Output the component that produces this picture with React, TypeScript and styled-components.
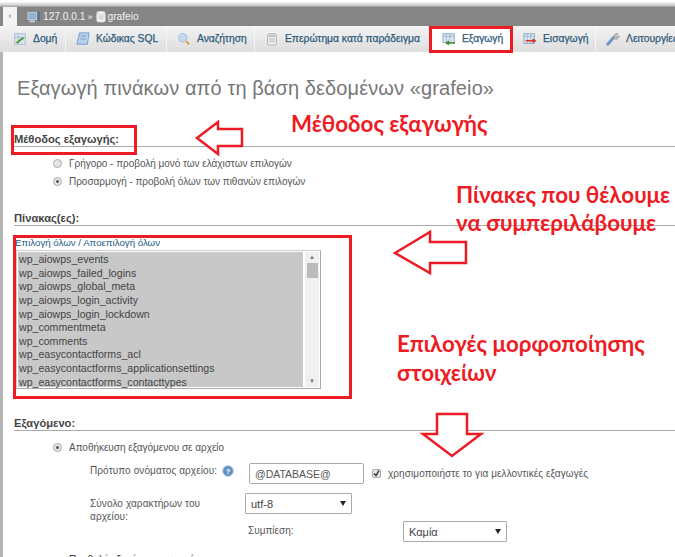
import React from 'react';
import styled, { createGlobalStyle } from 'styled-components';

const GlobalStyle = createGlobalStyle`
    html, body {
        margin: 0;
        padding: 0;
        background: #fff;
    }
    * {
        box-sizing: border-box;
    }
`;

const Page = styled.div`
    position: relative;
    width: 675px;
    height: 557px;
    overflow: hidden;
    background: #fff;
    font-family: "Liberation Sans", Arial, sans-serif;
    color: #444;
`;

const TopEdge = styled.div`
    height: 7px;
    background: linear-gradient(#fff 0, #fff 2px, #e4e4e4 3px, #d8d8d8 5px, #aaa 6px);
`;

const Breadcrumb = styled.div`
    display: flex;
    align-items: center;
    height: 19px;
    padding-left: 3px;
    background: #858585;
    color: #f2f2f2;
    font-size: 10.2px;
`;

const Collapse = styled.div`
    width: 14px;
    height: 19px;
    margin-right: 10px;
    background: #f4f4f4;
    color: #666;
    font-size: 9px;
    line-height: 18px;
    text-align: center;
`;

const Crumb = styled.span`
    display: flex;
    align-items: center;
    gap: 2px;
`;

const Sep = styled.span`
    margin: 0 3px 0 2px;
    font-size: 9px;
`;

const TabBar = styled.div`
    display: flex;
    height: 26px;
    padding-left: 3px;
    background: linear-gradient(#f3f3f3, #dedede);
    border-bottom: 1px solid #e2e2e2;
`;

const Tab = styled.div<{ $w: number; $active?: boolean }>`
    display: flex;
    flex: none;
    align-items: center;
    gap: 6px;
    width: ${p => p.$w}px;
    padding-left: ${p => (p.$active ? 12 : 10)}px;
    border-right: 1px solid #f6f6f6;
    background: ${p => (p.$active ? '#fff' : 'transparent')};
    color: #2f5a7a;
    font-size: 10.3px;
    white-space: nowrap;
    -webkit-text-stroke: 0.25px #2f5a7a;
`;

const Main = styled.div`
    height: 505px;
    padding: 24px 0 0 11px;
    border-left: 3px solid #b4b4b4;
`;

const Title = styled.h1`
    margin: 0 0 0 3px;
    color: #777;
    font-size: 20px;
    font-weight: 400;
    line-height: 24px;
    letter-spacing: 0.1px;
`;

const SectionTitle = styled.div<{ $top: number }>`
    margin-top: ${p => p.$top}px;
    padding-bottom: 0;
    border-bottom: 1px solid #aaa;
    color: #444;
    font-size: 11.2px;
    font-weight: 700;
    line-height: 13px;
`;

const Options = styled.div`
    display: flex;
    flex-direction: column;
    gap: 5px;
    padding: 10px 0 0 38px;
`;

const Option = styled.div`
    display: flex;
    align-items: center;
    gap: 7px;
    height: 13px;
    font-size: 10px;
    color: #555;
    letter-spacing: -0.03px;
`;

const Radio = styled.span<{ $on?: boolean }>`
    position: relative;
    flex: none;
    width: 9px;
    height: 9px;
    margin-left: 1px;
    border: 1px solid #aaa;
    border-radius: 50%;
    background: #e6e6e6;

    &::after {
        content: '';
        display: ${p => (p.$on ? 'block' : 'none')};
        width: 3px;
        height: 3px;
        margin: 2px;
        border-radius: 50%;
        background: #555;
    }
`;

const TableLinks = styled.div`
    margin: 10px 0 0 1px;
    color: #235a81;
    font-size: 9.7px;
    line-height: 13px;
`;

const ListBox = styled.div`
    display: flex;
    width: 305px;
    height: 139px;
    margin: 1px 0 0 2px;
    padding: 1px;
    border: 1px solid #ccc;
    border-right-color: #aaa;
    border-bottom-color: #aaa;
`;

const ListItems = styled.div`
    flex: none;
    width: 285px;
    background: #c8c8c8;
    padding: 1px 0 0 1px;
`;

const ListItem = styled.div`
    height: 13.65px;
    color: #444;
    font-size: 10.6px;
    line-height: 13.65px;
`;

const ScrollTrack = styled.div`
    display: flex;
    flex: 1;
    flex-direction: column;
    align-items: center;
    margin-left: 2px;
    background: #f0f0f0;
    color: #777;
    font-size: 6px;
`;

const ScrollArrow = styled.div`
    height: 11px;
    line-height: 11px;
`;

const ScrollThumb = styled.div`
    flex: none;
    width: 11px;
    height: 15px;
    background: #bbb;
`;

const ScrollGap = styled.div`
    flex: 1;
`;

const ExportBody = styled.div`
    padding: 10px 0 0 38px;
`;

const FormArea = styled.div`
    padding: 9px 0 0 38px;
    font-size: 10px;
    color: #555;
`;

const FormRow = styled.div<{ $h: number }>`
    display: flex;
    height: ${p => p.$h}px;
`;

const FormLabel = styled.div<{ $w: number; $top?: number }>`
    display: flex;
    flex: none;
    gap: 5px;
    width: ${p => p.$w}px;
    padding-top: ${p => p.$top ?? 0}px;
    line-height: 13px;
    letter-spacing: 0.1px;
`;

const Input = styled.div`
    flex: none;
    width: 115px;
    height: 21px;
    padding-left: 5px;
    border: 1px solid #aaa;
    border-radius: 2px;
    font-size: 10.5px;
    line-height: 20px;
    color: #555;
`;

const Check = styled.span`
    flex: none;
    display: flex;
    align-items: center;
    justify-content: center;
    width: 9px;
    height: 9px;
    margin: 6px 7px 0 8px;
    border: 1px solid #aaa;
    border-radius: 2px;
    background: #e4e4e4;
`;

const CheckText = styled.span`
    margin-top: 4px;
    line-height: 13px;
    letter-spacing: 0.08px;
`;

const Select = styled.div<{ $w: number }>`
    display: flex;
    flex: none;
    align-items: center;
    justify-content: space-between;
    width: ${p => p.$w}px;
    height: 21px;
    padding: 0 5px;
    border: 1px solid #aaa;
    border-radius: 1px;
    background: #fff;
    color: #444;
    font-size: 11px;
`;

const Caret = styled.span`
    width: 0;
    height: 0;
    border-left: 3px solid transparent;
    border-right: 3px solid transparent;
    border-top: 5px solid #222;
`;

const CompressLabel = styled.div`
    flex: none;
    width: 155px;
    margin: 3px 0 0 3px;
    line-height: 13px;
`;

const Cut = styled.div`
    margin: 5px 0 0 17px;
    font-size: 10px;
    line-height: 13px;
`;

// red marks that were drawn over the screenshot
const MarkBox = styled.div<{ $x: number; $y: number; $w: number; $h: number }>`
    position: absolute;
    left: ${p => p.$x}px;
    top: ${p => p.$y}px;
    width: ${p => p.$w}px;
    height: ${p => p.$h}px;
    border: 3px solid #ed1c24;
`;

const Note = styled.div<{ $x: number; $y: number }>`
    position: absolute;
    left: ${p => p.$x}px;
    top: ${p => p.$y}px;
    color: #ed1c24;
    font-family: Lato, "Open Sans", sans-serif;
    font-size: 22.3px;
    font-weight: 700;
    line-height: 29px;
    white-space: nowrap;
`;

const ArrowLayer = styled.svg`
    position: absolute;
    left: 0;
    top: 0;
    width: 675px;
    height: 557px;
    pointer-events: none;
`;

const IconBox = styled.svg<{ $w?: number }>`
    flex: none;
    width: ${p => p.$w ?? 14}px;
    height: 14px;
`;

const ServerIcon = () => (
    <IconBox $w={14} viewBox="0 0 16 16">
        <rect x="1" y="3" width="10" height="8" fill="#8fb0cf" stroke="#c4d2df" />
        <rect x="3" y="12" width="6" height="2" fill="#cfd6dd" />
        <rect x="12" y="2" width="3" height="11" fill="#5f7386" />
    </IconBox>
);

const DbIcon = () => (
    <IconBox $w={10} viewBox="0 0 12 16">
        <rect x="1" y="2" width="10" height="12" rx="2" fill="#f2f2f2" stroke="#ddd" />
        <ellipse cx="6" cy="3" rx="5" ry="1.6" fill="#fff" stroke="#ccc" />
        <rect x="3" y="6" width="6" height="5" fill="#d8d8d8" />
    </IconBox>
);

const StructIcon = () => (
    <IconBox viewBox="0 0 16 16">
        <rect x="2" y="2" width="12" height="12" fill="#dbe5f0" stroke="#a6bad0" />
        <path d="M2 6h12M6 2v12" stroke="#a6bad0" />
        <path d="M4 12.5l8-6" stroke="#4a9a2a" strokeWidth="2.2" />
    </IconBox>
);

const SqlIcon = () => (
    <IconBox viewBox="0 0 16 16">
        <path d="M4 1h11l-2 13H1z" fill="#b5cfec" stroke="#7199c4" />
        <path d="M5.5 4.5h6M5 8h6" stroke="#7199c4" />
    </IconBox>
);

const SearchIcon = () => (
    <IconBox viewBox="0 0 16 16">
        <circle cx="6.5" cy="6.5" r="4.8" fill="#c3d9ef" stroke="#a4b8cb" />
        <path d="M10.5 10.5l3.5 3.5" stroke="#d9a441" strokeWidth="2.6" />
    </IconBox>
);

const QueryIcon = () => (
    <IconBox viewBox="0 0 16 16">
        <rect x="3" y="3" width="10" height="12" rx="2" fill="#eee" stroke="#aaa" />
        <ellipse cx="8" cy="3.5" rx="5" ry="1.6" fill="#ddd" stroke="#aaa" />
        <rect x="5" y="7" width="6" height="5" fill="#d2d2d2" />
    </IconBox>
);

const ExportIcon = () => (
    <IconBox viewBox="0 0 16 16">
        <rect x="1" y="2" width="13" height="10" fill="#dbe6f2" stroke="#8aa4c0" />
        <path d="M1 5h13M5 2v10M9 2v10" stroke="#8aa4c0" strokeWidth="0.7" />
        <path d="M15 12.5H6M8 10.5l-3 2 3 2" fill="none" stroke="#3d8f2a" strokeWidth="1.6" />
    </IconBox>
);

const ImportIcon = () => (
    <IconBox viewBox="0 0 16 16">
        <rect x="1" y="2" width="12" height="11" fill="#dbe6f2" stroke="#8aa4c0" />
        <path d="M1 5h12M5 2v11M9 2v11" stroke="#8aa4c0" strokeWidth="0.7" />
        <path d="M3 10h10M11 8l3 2-3 2" fill="none" stroke="#d8352a" strokeWidth="1.6" />
    </IconBox>
);

const WrenchIcon = () => (
    <IconBox viewBox="0 0 16 16">
        <path d="M2 14l7-8" stroke="#6e96cc" strokeWidth="3.4" strokeLinecap="round" />
        <path d="M9 6a3.5 3.5 0 0 1 5-4l-2.4 2.2 1 1.4L15 4a3.5 3.5 0 0 1-5 4z" fill="#b8b8b8" stroke="#999" strokeWidth="0.6" />
    </IconBox>
);

const HelpIcon = () => (
    <IconBox $w={12} viewBox="0 0 12 12">
        <circle cx="6" cy="6" r="5.4" fill="#5f8fc4" stroke="#c4d3e3" />
        <text x="6" y="9" fontSize="8" fontWeight="700" textAnchor="middle" fill="#fff">?</text>
    </IconBox>
);

const tabs = [
    { label: 'Δομή', w: 63, icon: <StructIcon /> },
    { label: 'Κώδικας SQL', w: 101, icon: <SqlIcon /> },
    { label: 'Αναζήτηση', w: 88, icon: <SearchIcon /> },
    { label: 'Επερώτημα κατά παράδειγμα', w: 175, icon: <QueryIcon /> },
    { label: 'Εξαγωγή', w: 83, icon: <ExportIcon />, active: true },
    { label: 'Εισαγωγή', w: 83, icon: <ImportIcon /> },
    { label: 'Λειτουργίες', w: 90, icon: <WrenchIcon /> },
];

const tables = [
    'wp_aiowps_events',
    'wp_aiowps_failed_logins',
    'wp_aiowps_global_meta',
    'wp_aiowps_login_activity',
    'wp_aiowps_login_lockdown',
    'wp_commentmeta',
    'wp_comments',
    'wp_easycontactforms_acl',
    'wp_easycontactforms_applicationsettings',
    'wp_easycontactforms_contacttypes',
];

const App: React.FC = () => {
    return (
        <Page>
            <GlobalStyle />
            <TopEdge />
            <Breadcrumb>
                <Collapse>‹</Collapse>
                <Crumb><ServerIcon />127.0.0.1</Crumb>
                <Sep>»</Sep>
                <Crumb><DbIcon />grafeio</Crumb>
            </Breadcrumb>
            <TabBar>
                {tabs.map(t => (
                    <Tab key={t.label} $w={t.w} $active={t.active}>
                        {t.icon}
                        {t.label}
                    </Tab>
                ))}
            </TabBar>
            <Main>
                <Title>Εξαγωγή πινάκων από τη βάση δεδομένων «grafeio»</Title>

                <SectionTitle $top={33}>Μέθοδος εξαγωγής:</SectionTitle>
                <Options>
                    <Option><Radio />Γρήγορο - προβολή μονό των ελάχιστων επιλογών</Option>
                    <Option><Radio $on />Προσαρμογή - προβολή όλων των πιθανών επιλογών</Option>
                </Options>

                <SectionTitle $top={24}>Πίνακας(ες):</SectionTitle>
                <TableLinks>Επιλογή όλων / Αποεπιλογή όλων</TableLinks>
                <ListBox>
                    <ListItems>
                        {tables.map(t => <ListItem key={t}>{t}</ListItem>)}
                    </ListItems>
                    <ScrollTrack>
                        <ScrollArrow>▲</ScrollArrow>
                        <ScrollThumb />
                        <ScrollGap />
                        <ScrollArrow>▼</ScrollArrow>
                    </ScrollTrack>
                </ListBox>

                <SectionTitle $top={28}>Εξαγόμενο:</SectionTitle>
                <ExportBody>
                    <Option><Radio $on />Αποθήκευση εξαγόμενου σε αρχείο</Option>
                    <FormArea>
                        <FormRow $h={30}>
                            <FormLabel $w={159} $top={1}>
                                Πρότυπο ονόματος αρχείου:
                                <HelpIcon />
                            </FormLabel>
                            <Input>@DATABASE@</Input>
                            <Check>
                                <svg width="7" height="7" viewBox="0 0 7 7">
                                    <path d="M1 3.5l2 2 3-5" fill="none" stroke="#333" strokeWidth="1.4" />
                                </svg>
                            </Check>
                            <CheckText>χρησιμοποιήστε το για μελλοντικές εξαγωγές</CheckText>
                        </FormRow>
                        <FormRow $h={28}>
                            <FormLabel $w={155} $top={4}>
                                <span>Σύνολο χαρακτήρων του<br />αρχείου:</span>
                            </FormLabel>
                            <Select $w={107}>utf-8<Caret /></Select>
                        </FormRow>
                        <FormRow $h={27}>
                            <FormLabel $w={155} />
                            <CompressLabel>Συμπίεση:</CompressLabel>
                            <Select $w={104}>Καμία<Caret /></Select>
                        </FormRow>
                    </FormArea>
                    <Cut>Προβολή εξαγόμενου ως κείμενο</Cut>
                </ExportBody>
            </Main>

            <MarkBox $x={429} $y={26} $w={84} $h={27} />
            <MarkBox $x={11} $y={125} $w={126} $h={30} />
            <MarkBox $x={13} $y={235} $w={339} $h={164} />

            <ArrowLayer viewBox="0 0 675 557">
                <g fill="#fff" stroke="#ed1c24" strokeWidth="2.5">
                    <polygon points="197,138 218,122 218,129 242,129 242,146 218,146 218,154" />
                    <polygon points="395,253 430,232 430,242 466,242 466,263 430,263 430,273" />
                    <polygon points="437,414 467,414 467,434 481,434 452,456 423,434 437,434" />
                </g>
            </ArrowLayer>

            <Note $x={291} $y={109}>Μέθοδος εξαγωγής</Note>
            <Note $x={456} $y={180}>Πίνακες που θέλουμε</Note>
            <Note $x={456} $y={208}>να συμπεριλάβουμε</Note>
            <Note $x={397} $y={329}>Επιλογές μορφοποίησης</Note>
            <Note $x={397} $y={358}>στοιχείων</Note>
        </Page>
    );
};

export default App;
